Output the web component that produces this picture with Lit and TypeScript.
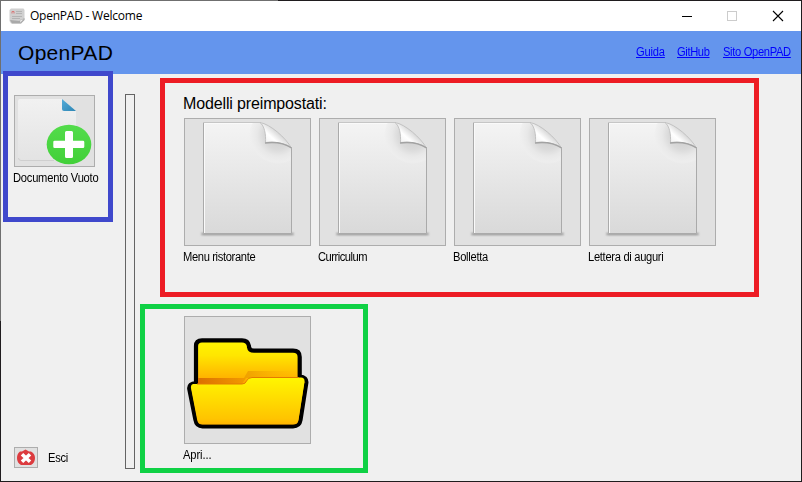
import { LitElement, html, css, svg } from "lit";
import { customElement, property } from "lit/decorators.js";
import { styleMap } from "lit/directives/style-map.js";

const sheet = svg`
  <defs>
    <linearGradient id="paper" x1="0" y1="0" x2="0" y2="1">
      <stop offset="0" stop-color="#f4f4f4"/><stop offset="1" stop-color="#d9d9d9"/>
    </linearGradient>
    <linearGradient id="curl" gradientUnits="userSpaceOnUse" x1="83" y1="23" x2="93" y2="12">
      <stop offset="0" stop-color="#f6f6f6"/><stop offset=".4" stop-color="#fff"/><stop offset="1" stop-color="#d2d2d2"/>
    </linearGradient>
    <radialGradient id="glow" gradientUnits="userSpaceOnUse" cx="94" cy="17" r="29">
      <stop offset="0" stop-color="#c8c8c8"/><stop offset=".5" stop-color="#dadada"/>
      <stop offset=".72" stop-color="#e8e8e8"/><stop offset=".94" stop-color="#eee" stop-opacity=".8"/><stop offset="1" stop-color="#eee" stop-opacity="0"/>
    </radialGradient>
    <clipPath id="page"><path d="M19.500 4.500H77L107.500 30V116.500H19.500Z"/></clipPath>
    <filter id="soft" x="-10%" y="-200%" width="120%" height="500%"><feGaussianBlur stdDeviation=".9"/></filter>
  </defs>
  <rect x="17.500" y="115" width="92" height="2" fill="#888" filter="url(#soft)"/>
  <path d="M19.500 4.500H77C86 8 102 20 107.500 29V115.500H19.500Z" fill="url(#paper)"/>
  <path d="M20.500 115V5.500H77" fill="none" stroke="#fafafa"/>
  <circle cx="94" cy="17" r="29" fill="url(#glow)" clip-path="url(#page)"/>
  <path d="M19.500 4.500V115.500H107.500V29" fill="none" stroke="#aaa"/>
  <path d="M19.500 4.500H77" fill="none" stroke="#c6c6c6"/>
  <path d="M76 4.500C80.500 8 82 16 81.500 24.500C91 23.500 101 25 107.500 30C102 20 86 6 76 4.500Z" fill="url(#curl)" stroke="#c2c2c2"/>
  <path d="M81 25C91 23.800 101 25.500 107.500 30" fill="none" stroke="#a2a2a2" stroke-width="1.500"/>
`;

const newDoc = svg`
  <defs>
    <linearGradient id="blank" x1="0" y1="0" x2="0" y2="1">
      <stop offset="0" stop-color="#f1f1f1"/><stop offset="1" stop-color="#e3e3e3"/>
    </linearGradient>
    <linearGradient id="fold" x1="0" y1="0" x2="1" y2="1">
      <stop offset="0" stop-color="#55acd9"/><stop offset="1" stop-color="#2e86b4"/>
    </linearGradient>
    <linearGradient id="green" x1="0" y1="0" x2="0" y2="1">
      <stop offset="0" stop-color="#53dc4b"/><stop offset="1" stop-color="#42d039"/>
    </linearGradient>
  </defs>
  <path d="M6 4H48L62 16V66H6Q4 66 4 64V6Q4 4 6 4Z" fill="url(#blank)"/>
  <path d="M4.500 63Q4.500 65.500 7 65.500H40" fill="none" stroke="#cfcfcf"/>
  <path d="M48 4L62 16H50Q48 16 48 14Z" fill="url(#fold)"/>
  <ellipse cx="55" cy="49.500" rx="22.300" ry="19.700" fill="url(#green)"/>
  <path d="M52.500 36H57.500Q59 36 59 37.500V45.700H69Q70.300 45.700 70.300 47V51.700Q70.300 53 69 53H59V61.500Q59 63 57.500 63H52.500Q51 63 51 61.500V53H40.600Q39.300 53 39.300 51.700V47Q39.300 45.700 40.600 45.700H51V37.500Q51 36 52.500 36Z" fill="#fff"/>
`;

const folder = svg`
  <defs>
    <linearGradient id="back" gradientUnits="userSpaceOnUse" x1="0" y1="24" x2="0" y2="68">
      <stop offset="0" stop-color="#fff600"/><stop offset=".35" stop-color="#ffe600"/><stop offset=".85" stop-color="#ffb400"/><stop offset="1" stop-color="#ffa200"/>
    </linearGradient>
    <linearGradient id="front" x1="0" y1="0" x2="0" y2="1">
      <stop offset="0" stop-color="#fff600"/><stop offset=".88" stop-color="#ffc400"/><stop offset="1" stop-color="#ffb400"/>
    </linearGradient>
    <linearGradient id="shade" x1="0" y1="0" x2="1" y2="0">
      <stop offset="0" stop-color="#dc7000"/><stop offset="1" stop-color="#f29a00"/>
    </linearGradient>
    <linearGradient id="shadow" x1="0" y1="0" x2="1" y2="0">
      <stop offset="0" stop-color="#eea000"/><stop offset="1" stop-color="#ffb400" stop-opacity="0"/>
    </linearGradient>
  </defs>
  <path d="M12 67V30Q12 24.300 18 24.300H58Q64 24.300 65 30V31Q65.500 34.700 70 34.700H109Q115.700 34.700 115.700 41V60.500Q123 61 122.300 67L116.500 104Q115.500 110.300 109 110.300H18.500Q12.500 110.300 11.500 104L5.300 73Q4.500 67.500 12 67Z" fill="url(#back)" stroke="#000" stroke-width="4.200" stroke-linejoin="round"/>
  <path d="M14 62H62L58 68H14Z" fill="url(#shade)"/>
  <path d="M64 55H113V62H60Z" fill="url(#shadow)"/>
  <path d="M9 68H58Q61.500 68 62.500 65Q64 61.500 68 61.500H117Q121 61.500 120.500 66L114.500 104Q114 108.500 109 108.500H18.500Q14 108.500 13.200 104L7 72Q6.500 68.500 9 68Z" fill="url(#front)"/>
  <path d="M13 68H58Q61.500 68 62.500 65Q64 61.500 68 61.500H115" fill="none" stroke="#e57a00"/>
`;

const exitMark = svg`
  <path d="M8 4.500L11.500 2.500L15 4.500H17Q21 6.500 21 11Q21 16 17 18H7Q3 16 3 11Q3 6.500 6 4.500Z" fill="#dc3b3f"/>
  <path d="M8 7.200L16 14.800M16 7.200L8 14.800" stroke="#fff" stroke-width="3.600"/>
`;

const art = { sheet, newDoc, folder, exitMark };

@customElement("picture-button")
class PictureButton extends LitElement {
  @property() art: keyof typeof art = "sheet";
  static styles = css`
    :host { display: block; box-sizing: border-box; border: 1px solid #adadad; background: #e1e1e1; }
    svg { display: block; margin: -1px; width: calc(100% + 2px); height: calc(100% + 2px); }
  `;
  render() {
    return html`<svg>${art[this.art]}</svg>`;
  }
}

@customElement("app-root")
class AppRoot extends LitElement {
  static styles = css`
    :host {
      display: flex; flex-direction: column; box-sizing: border-box;
      width: 802px; height: 482px; overflow: hidden; padding: 1px;
      background:
        linear-gradient(#f0f0f0, #f0f0f0) 1px 1px / 800px 480px no-repeat,
        linear-gradient(#6f6f6f, #6f6f6f) 0 0 / 278px 1px no-repeat,
        linear-gradient(#6f6f6f, #6f6f6f) 0 0 / 1px 321px no-repeat,
        #1f1c1e;
      color: #000;
      font: 12px/14px "Liberation Sans", Arial, sans-serif; white-space: nowrap;
    }
    .titlebar { display: flex; align-items: center; height: 30px; background: #fff; flex: none; }
    .logo { width: 16px; height: 16px; margin-left: 8px; }
    .caption { flex: 1; margin-left: 5px; font: 12px/16px "Open Sans", "Noto Sans", sans-serif; letter-spacing: -.23px; }
    .controls { width: 111px; height: 12px; margin-right: 17px; }
    .header { display: flex; align-items: center; height: 43px; flex: none; background: #6495ed; padding: 0 9px 0 17px; box-sizing: border-box; }
    .brand { flex: 1; font-size: 21px; line-height: 24px; letter-spacing: .3px; }
    .links { display: flex; gap: 13px; padding-bottom: 2px; }
    .narrow { display: inline-block; transform: scaleX(.93); transform-origin: 0 50%; }
    .link { color: #00f; text-decoration: underline; text-underline-offset: 1px; text-decoration-thickness: 1px; text-decoration-skip-ink: none; }
    .guida { letter-spacing: -.2px; width: 28px; }
    .github { letter-spacing: -.4px; width: 33px; }
    .sito { letter-spacing: -.35px; width: 69px; }
    .body { display: flex; flex: 1; min-height: 0; }
    .sidebar { display: flex; flex-direction: column; justify-content: space-between; width: 124px; }
    .frame { box-sizing: border-box; border: 5px solid; }
    .blank { border-color: #3f48cc; width: 110px; height: 151px; margin: -3px 0 0 2px; padding: 19px 0 0 6px; z-index: 1; }
    .blank picture-button { width: 81px; height: 72px; }
    .label { margin: 4px 0 0 -1px; }
    .exit { display: flex; align-items: center; gap: 10px; margin: 0 0 13px 13px; letter-spacing: -.3px; }
    .exit picture-button { width: 24px; height: 21px; }
    .divider { box-sizing: border-box; width: 10px; height: 375px; margin-top: 20px; border: 1px solid #646464; }
    .main { display: flex; flex-direction: column; align-items: flex-start; gap: 7px; padding: 4px 0 0 5px; }
    .templates { border-color: #ed1c24; width: 599px; height: 219px; margin-left: 20px; padding: 12px 0 0 19px; }
    .heading { font-size: 16px; line-height: 18px; margin: 0 0 5px -1px; letter-spacing: -.14px; }
    .cards { display: flex; gap: 8px; }
    .card { width: 127px; }
    .card picture-button { height: 128px; }
    .open { border-color: #0fd145; width: 228px; height: 169px; padding: 7px 0 0 39px; }
  `;
  templates = [
    { name: "Menu ristorante", tracking: -0.38 },
    { name: "Curriculum", tracking: -0.52 },
    { name: "Bolletta", tracking: -0.3 },
    { name: "Lettera di auguri", tracking: -0.33 },
  ];
  label(text: string, tracking: number) {
    return html`<div class="label"><span class="narrow" style=${styleMap({ letterSpacing: `${tracking}px` })}>${text}</span></div>`;
  }
  render() {
    return html`
      <div class="titlebar">
        <svg class="logo" viewBox="0 0 16 16">
          <path d="M2 .500H14.500L15.500 2V12L12 15.500H2L.500 13V2Z" fill="#d0d0d0"/>
          <path d="M1 12L3 15.500H12L15.500 12V10L11 13Z" fill="#a9a9a9"/>
          <path d="M7 3.500H13M7 5.500H13M3 8.500H13M3 10.500H11" stroke="#b4b4b4"/>
          <path d="M3 5.500V3.500H5V5.500" fill="none" stroke="#d87878"/>
          <path d="M11 15V12L15 11Z" fill="#eee" stroke="#aaa" stroke-width=".500"/>
        </svg>
        <span class="caption">OpenPAD - Welcome</span>
        <svg class="controls" viewBox="0 0 111 12">
          <path d="M9 6.500H19" stroke="#000"/>
          <rect x="54.500" y="1.500" width="9" height="9" fill="none" stroke="#ccc"/>
          <path d="M100 1L110 11M110 1L100 11" stroke="#000" stroke-width="1.100"/>
        </svg>
      </div>
      <div class="header">
        <span class="brand">OpenPAD</span>
        <nav class="links">
          <span class="link narrow guida">Guida</span><span class="link narrow github">GitHub</span><span class="link narrow sito">Sito OpenPAD</span>
        </nav>
      </div>
      <div class="body">
        <div class="sidebar">
          <div class="frame blank"><picture-button art="newDoc"></picture-button>${this.label("Documento Vuoto", -0.25)}</div>
          <div class="exit"><picture-button art="exitMark"></picture-button><span class="narrow">Esci</span></div>
        </div>
        <div class="divider"></div>
        <div class="main">
          <section class="frame templates">
            <div class="heading">Modelli preimpostati:</div>
            <div class="cards">
              ${this.templates.map((t) => html`<div class="card"><picture-button art="sheet"></picture-button>${this.label(t.name, t.tracking)}</div>`)}
            </div>
          </section>
          <section class="frame open">
            <div class="card"><picture-button art="folder"></picture-button>${this.label("Apri...", -0.1)}</div>
          </section>
        </div>
      </div>`;
  }
}
